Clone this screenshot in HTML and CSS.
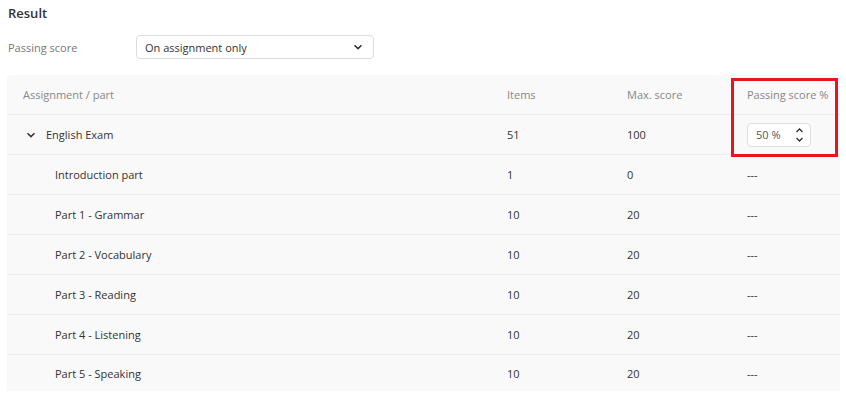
FILE: index.html
```html
<!DOCTYPE html>
<html lang="en">
<head>
  <meta charset="UTF-8" />
  <title>Result</title>
  <link rel="stylesheet" href="styles.css">
</head>
<body>
  <div class="page">
    <h2 class="title">Result</h2>

    <div class="setting">
      <span class="setting-label">Passing score</span>
      <div class="select">
        <span>On assignment only</span>
        <svg width="10" height="6" viewBox="0 0 10 6"><path d="M1.5 1.2 L5 4.6 L8.5 1.2" fill="none" stroke="#333" stroke-width="1.6"/></svg>
      </div>
    </div>

    <div class="table">
      <div class="row head">
        <div class="cell">Assignment / part</div>
        <div class="cell">Items</div>
        <div class="cell">Max. score</div>
        <div class="cell">Passing score %</div>
      </div>

      <div class="row">
        <div class="cell name">
          <svg class="chev" width="10" height="6" viewBox="0 0 10 6"><path d="M1.5 1.2 L5 4.6 L8.5 1.2" fill="none" stroke="#333" stroke-width="1.5"/></svg>
          English Exam
        </div>
        <div class="cell">51</div>
        <div class="cell">100</div>
        <div class="cell">
          <div class="spin">
            <span>50 %</span>
            <svg width="9" height="16" viewBox="0 0 9 16"><path d="M1.5 5 L4.5 2 L7.5 5 M1.5 11 L4.5 14 L7.5 11" fill="none" stroke="#333" stroke-width="1.4"/></svg>
          </div>
        </div>
      </div>

      <div class="row"><div class="cell sub">Introduction part</div><div class="cell">1</div><div class="cell">0</div><div class="cell">---</div></div>
      <div class="row"><div class="cell sub">Part 1 - Grammar</div><div class="cell">10</div><div class="cell">20</div><div class="cell">---</div></div>
      <div class="row"><div class="cell sub">Part 2 - Vocabulary</div><div class="cell">10</div><div class="cell">20</div><div class="cell">---</div></div>
      <div class="row"><div class="cell sub">Part 3 - Reading</div><div class="cell">10</div><div class="cell">20</div><div class="cell">---</div></div>
      <div class="row"><div class="cell sub">Part 4 - Listening</div><div class="cell">10</div><div class="cell">20</div><div class="cell">---</div></div>
      <div class="row last"><div class="cell sub">Part 5 - Speaking</div><div class="cell">10</div><div class="cell">20</div><div class="cell">---</div></div>
    </div>

    <div class="highlight"></div>
  </div>
</body>
</html>
```

FILE: styles.css
```css
html, body {
  margin: 0;
  overflow: hidden;
}

body {
  font-family: 'Open Sans', 'Noto Sans', sans-serif;
  color: #333;
  background: #fff;
}

.page {
  position: relative;
  padding: 4px 6px 0 7px;
}

.title {
  margin: 0 0 0 1px;
  font-size: 13px;
  font-weight: 600;
  color: #333;
  line-height: 18px;
}

.setting {
  display: flex;
  align-items: center;
  margin-top: 13px;
  height: 24px;
}

.setting-label {
  width: 128px;
  padding-left: 1px;
  font-size: 11px;
  color: #777;
}

.select {
  width: 238px;
  height: 24px;
  box-sizing: border-box;
  border: 1px solid #dcdcdc;
  border-radius: 4px;
  display: flex;
  align-items: center;
  justify-content: space-between;
  padding: 0 10px 0 8px;
  font-size: 11px;
  color: #333;
}

.table {
  margin-top: 16px;
  background: #f8f9f8;
  border-radius: 4px 4px 0 0;
}

.row {
  display: grid;
  grid-template-columns: 1fr 120px 120px 109px;
  height: 40px;
  border-bottom: 1px solid #ececec;
  box-sizing: border-box;
  font-size: 11px;
}

.row.last {
  height: 36px;
  border-bottom: none;
}

.row.head {
  color: #888;
}

.cell {
  display: flex;
  align-items: center;
  padding-left: 16px;
}

.cell.name {
  padding-left: 19px;
}

.chev {
  margin-right: 10px;
}

.cell.sub {
  padding-left: 48px;
}

.spin {
  width: 64px;
  height: 24px;
  box-sizing: border-box;
  border: 1px solid #dedede;
  border-radius: 4px;
  background: #fff;
  display: flex;
  align-items: center;
  justify-content: space-between;
  padding: 0 6px 0 8px;
  color: #555;
}

.highlight {
  position: absolute;
  left: 731px;
  top: 78px;
  width: 107px;
  height: 79px;
  box-sizing: border-box;
  border: 3px solid #e8141e;
}
```
